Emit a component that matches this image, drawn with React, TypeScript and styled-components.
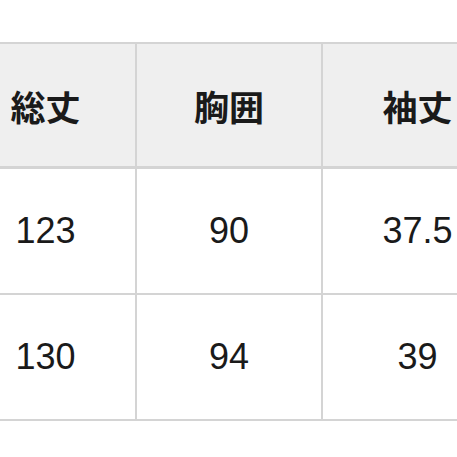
import React from 'react'
import styled, { createGlobalStyle } from 'styled-components'

const GlobalStyle = createGlobalStyle`
  html, body {
    margin: 0;
    padding: 0;
    background: #ffffff;
    overflow: hidden;
  }
`

const Page = styled.div`
  width: 457px;
  height: 457px;
  overflow: hidden;
  padding-top: 42px;
  box-sizing: border-box;
`

const SizeTable = styled.table`
  border-collapse: collapse;
  table-layout: fixed;
  margin-left: -46px;
  width: 558px;
  color: #1a1a1a;
`

const Col = styled.col<{ width: number }>`
  width: ${(props) => props.width}px;
`

const HeadCell = styled.th`
  height: 122px;
  padding: 0;
  border: 2px solid #d4d4d4;
  border-bottom-width: 3px;
  background: #efefef;
  font-family: "Noto Sans CJK JP", "Noto Sans", sans-serif;
  font-size: 35px;
  font-weight: 700;
  text-align: center;
  vertical-align: middle;
`

const BodyCell = styled.td`
  height: 124px;
  padding: 0;
  border: 2px solid #d4d4d4;
  font-family: "Liberation Sans", Arial, sans-serif;
  font-size: 36px;
  font-weight: 400;
  text-align: center;
  vertical-align: middle;
`

const headers = ['総丈', '胸囲', '袖丈']
const rows = [
  ['123', '90', '37.5'],
  ['130', '94', '39'],
]

export default function App() {
  return (
    <>
      <GlobalStyle />
      <Page>
        <SizeTable>
          <colgroup>
            <Col width={181} />
            <Col width={186} />
            <Col width={191} />
          </colgroup>
          <thead>
            <tr>
              {headers.map((h) => (
                <HeadCell key={h}>{h}</HeadCell>
              ))}
            </tr>
          </thead>
          <tbody>
            {rows.map((r, i) => (
              <tr key={i}>
                {r.map((v, j) => (
                  <BodyCell key={j}>{v}</BodyCell>
                ))}
              </tr>
            ))}
          </tbody>
        </SizeTable>
      </Page>
    </>
  )
}
